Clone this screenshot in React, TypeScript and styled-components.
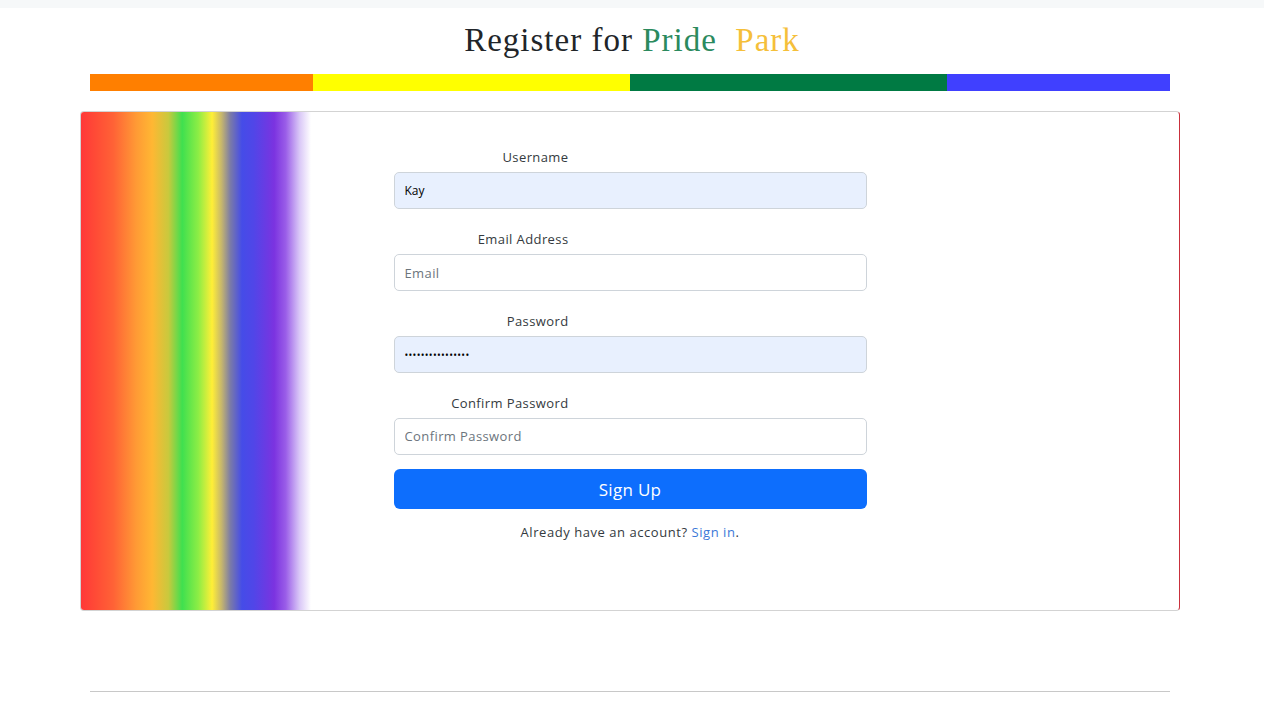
import React from "react";
import styled, { createGlobalStyle } from "styled-components";

const Global = createGlobalStyle`
  html, body { margin: 0; padding: 0; background: #fff; }
  body { font-family: "Open Sans", "Noto Sans", sans-serif; color: #212529; }
  * { box-sizing: border-box; }
`;

const TopStrip = styled.div`
  height: 8px;
  background: #f6f8f9;
`;

const Title = styled.h1`
  margin: 0;
  padding-top: 14px;
  height: 66px;
  text-align: center;
  font-family: "Liberation Serif", "DejaVu Serif", serif;
  font-weight: 400;
  font-size: 33px;
  line-height: 36px;
  letter-spacing: 1px;
  color: #212529;
  white-space: pre;
`;

const Word = styled.span<{ $c: string }>`
  color: ${(p) => p.$c};
`;

const Stripes = styled.div`
  margin: 0 94px 0 90px;
  height: 17px;
  display: grid;
  grid-template-columns: 223fr 317fr 317fr 223fr;
`;

const Stripe = styled.div<{ $c: string }>`
  background: ${(p) => p.$c};
`;

const Card = styled.div`
  margin: 20px 84px 0 80px;
  height: 500px;
  border: 1px solid #d3d3d3;
  border-right-color: #c9303c;
  border-radius: 4px;
  display: grid;
  grid-template-columns: 1fr 473px 1fr;
  overflow: hidden;
`;

const Rainbow = styled.div`
  width: 230px;
  height: 100%;
  background: linear-gradient(
    to right,
    #ff3838 0%,
    #ff4a36 6%,
    #ff6236 14%,
    #ff9a35 24%,
    #ffb733 31%,
    #c9c93d 38%,
    #3fe04f 44%,
    #8ded45 51%,
    #ffef37 57%,
    #c8b86b 61%,
    #7a7aa8 65%,
    #454ce8 70%,
    #5046e8 75%,
    #7b33e0 84%,
    #9a5de8 89%,
    #d9c7f7 95%,
    #ffffff 100%
  );
`;

const Form = styled.form`
  padding-top: 36px;
  display: flex;
  flex-direction: column;
`;

const Field = styled.div<{ $gap: number }>`
  display: flex;
  flex-direction: column;
  margin-bottom: ${(p) => p.$gap}px;
`;

const Label = styled.label`
  width: 175px;
  text-align: right;
  font-size: 13px;
  line-height: 18px;
  letter-spacing: 0.4px;
  color: #343a40;
  margin-bottom: 6px;
`;

const Input = styled.input<{ $filled?: boolean }>`
  width: 473px;
  height: 37px;
  border: 1px solid #ced4da;
  border-radius: 5px;
  padding: 0 10px;
  font-family: "Open Sans", "Noto Sans", sans-serif;
  background: ${(p) => (p.$filled ? "#e8f0fe" : "#fff")};
  font-size: ${(p) => (p.$filled ? "12px" : "13px")};
  color: #000;
  outline: none;
  &[type="password"] {
    font-size: 10px;
    letter-spacing: 0.3px;
  }
  &::placeholder {
    color: #6c757d;
    font-size: 13px;
    letter-spacing: 0.4px;
  }
`;

const Button = styled.button`
  margin-top: 14px;
  height: 40px;
  width: 473px;
  border: none;
  border-radius: 6px;
  background: #0d6efd;
  color: #fff;
  font-family: "Open Sans", "Noto Sans", sans-serif;
  font-size: 17px;
  letter-spacing: 0.3px;
`;

const Note = styled.p`
  margin: 14px 0 0;
  text-align: center;
  font-size: 13px;
  line-height: 18px;
  letter-spacing: 0.55px;
  color: #343a40;
`;

const Link = styled.a`
  color: #3b78d8;
  text-decoration: none;
`;

const Rule = styled.hr`
  margin: 80px 94px 0 90px;
  border: none;
  border-top: 1px solid #c8c8c8;
`;

export default function App() {
  return (
    <>
      <Global />
      <TopStrip />
      <Title>
        Register for <Word $c="#2b8a5e">Pride</Word>{"  "}
        <Word $c="#f5bf3a">Park</Word>
      </Title>
      <Stripes>
        <Stripe $c="#ff7f00" />
        <Stripe $c="#ffff00" />
        <Stripe $c="#007a43" />
        <Stripe $c="#4040ff" />
      </Stripes>
      <Card>
        <Rainbow />
        <Form onSubmit={(e) => e.preventDefault()}>
          <Field $gap={21}>
            <Label>Username</Label>
            <Input $filled defaultValue="Kay" />
          </Field>
          <Field $gap={21}>
            <Label>Email Address</Label>
            <Input placeholder="Email" />
          </Field>
          <Field $gap={21}>
            <Label>Password</Label>
            <Input $filled type="password" defaultValue="••••••••••••••••" />
          </Field>
          <Field $gap={0}>
            <Label>Confirm Password</Label>
            <Input type="password" placeholder="Confirm Password" />
          </Field>
          <Button type="submit">Sign Up</Button>
          <Note>
            Already have an account? <Link href="#">Sign in</Link>.
          </Note>
        </Form>
        <div />
      </Card>
      <Rule />
    </>
  );
}
